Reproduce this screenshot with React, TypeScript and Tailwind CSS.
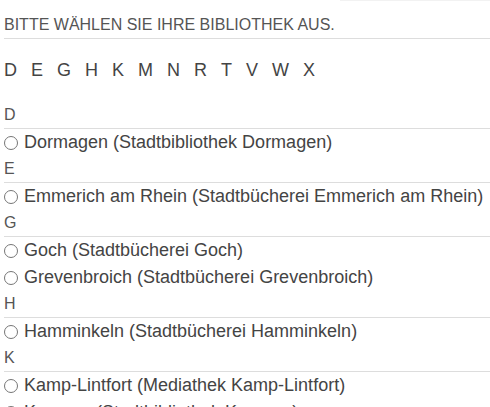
const letters = ["D", "E", "G", "H", "K", "M", "N", "R", "T", "V", "W", "X"];

const libraries: { letter: string; items: string[] }[] = [
  { letter: "D", items: ["Dormagen (Stadtbibliothek Dormagen)"] },
  { letter: "E", items: ["Emmerich am Rhein (Stadtbücherei Emmerich am Rhein)"] },
  {
    letter: "G",
    items: ["Goch (Stadtbücherei Goch)", "Grevenbroich (Stadtbücherei Grevenbroich)"],
  },
  { letter: "H", items: ["Hamminkeln (Stadtbücherei Hamminkeln)"] },
  {
    letter: "K",
    items: [
      "Kamp-Lintfort (Mediathek Kamp-Lintfort)",
      "Kempen (Stadtbibliothek Kempen)",
      "Kevelaer (Öffentliche Begegnungsstätte Kevelaer)",
    ],
  },
  { letter: "M", items: ["Moers (Bibliothek Moers)"] },
  { letter: "N", items: ["Neukirchen-Vluyn (Stadtbücherei Neukirchen-Vluyn)"] },
  { letter: "R", items: ["Rheinberg (Stadtbibliothek Rheinberg)"] },
];

function Radio() {
  return (
    <span className="block w-[14px] h-[14px] min-w-[14px] rounded-full border border-[#767676] bg-white" />
  );
}

export default function App() {
  return (
    <div className="w-[490px] h-[407px] overflow-hidden bg-white font-['Liberation_Sans',Arial,sans-serif] text-[#555]">
      {/* faint strip from element above */}
      <div className="flex justify-end">
        <div className="w-[150px] h-px bg-[#f2f2f2]" />
      </div>

      <div className="pl-[4px]">
        <h1 className="pt-[14px] pb-[3px] text-[16px] leading-[20px] font-normal border-b border-[#ddd]">
          BITTE WÄHLEN SIE IHRE BIBLIOTHEK AUS.
        </h1>

        <nav className="mt-[18px] flex gap-[14px] text-[18px] leading-[26px]">
          {letters.map((l) => (
            <a key={l} className="text-[#444]">
              {l}
            </a>
          ))}
        </nav>

        <div className="mt-[19px]">
          {libraries.map((group) => (
            <div key={group.letter}>
              <div className="h-[27px] text-[16px] leading-[26px] border-b border-[#ddd]">
                {group.letter}
              </div>
              {group.items.map((item) => (
                <label
                  key={item}
                  className="flex items-center gap-[6px] h-[27px] text-[18px] text-[#444] whitespace-nowrap"
                >
                  <Radio />
                  <span>{item}</span>
                </label>
              ))}
            </div>
          ))}
        </div>
      </div>
    </div>
  );
}
